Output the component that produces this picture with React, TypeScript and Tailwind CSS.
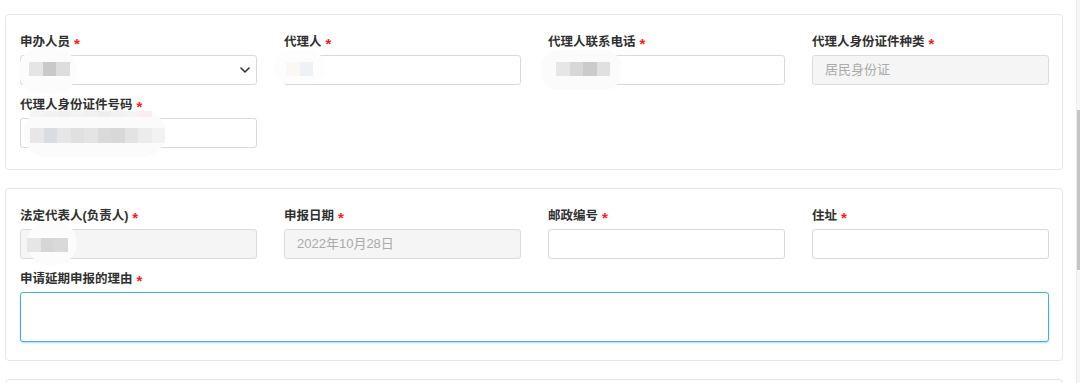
import React from 'react'

const FONT = "font-['Liberation_Sans','Noto_Sans_CJK_SC',sans-serif]"

// 打码的马赛克块（截图里被模糊掉的内容）
function Mosaic({ colors, h = 14 }: { colors: string[]; h?: number }) {
  return (
    <div className="flex blur-[0.4px]">
      {colors.map((c, i) => (
        <div key={i} className="w-[13.5px]" style={{ backgroundColor: c, height: h }} />
      ))}
    </div>
  )
}

function Label({ text }: { text: string }) {
  return (
    <div className="flex items-center h-5 mb-[3px] text-[12.5px] font-bold text-[#303030] leading-5">
      <span>{text}</span>
      <span className="ml-[4px] text-[15px] font-bold text-[#ff1a1a] translate-y-[2px]">*</span>
    </div>
  )
}

function TextInput({ value, disabled }: { value?: string; disabled?: boolean }) {
  return (
    <div
      className={`h-[30px] rounded-[3px] border px-3 flex items-center text-[13px] text-[#aaa] ${
        disabled ? 'bg-[#f5f5f5] border-[#dcdcdc]' : 'bg-white border-[#d9d9d9]'
      }`}
    >
      {value}
    </div>
  )
}

function Select() {
  return (
    <div className="h-[30px] rounded-[3px] border border-[#d9d9d9] bg-white flex items-center justify-end pr-[6px]">
      <svg width="10" height="6" viewBox="0 0 10 6" fill="none">
        <path d="M1 1l4 4 4-4" stroke="#333" strokeWidth="1.6" strokeLinecap="round" strokeLinejoin="round" />
      </svg>
    </div>
  )
}

export default function App() {
  return (
    <div className={`relative flex h-[383px] w-[1080px] overflow-hidden bg-white ${FONT}`}>
      <div className="w-[1076px]">
        {/* 申办人员 / 代理人 */}
        <div className="ml-[5px] mt-[14px] w-[1058px] rounded-[4px] border border-[#e6e6e6] pl-[14px] pr-[13px] pt-[17px] pb-[21px]">
          <div className="grid grid-cols-4 gap-x-[27px] gap-y-[10px]">
            <div>
              <Label text="申办人员" />
              <Select />
            </div>
            <div>
              <Label text="代理人" />
              <TextInput />
            </div>
            <div>
              <Label text="代理人联系电话" />
              <TextInput />
            </div>
            <div>
              <Label text="代理人身份证件种类" />
              <TextInput value="居民身份证" disabled />
            </div>
            <div>
              <Label text="代理人身份证件号码" />
              <TextInput />
            </div>
          </div>
        </div>

        {/* 法定代表人 / 申报信息 */}
        <div className="ml-[5px] mt-[18px] w-[1058px] rounded-[4px] border border-[#e6e6e6] pl-[14px] pr-[13px] pt-[17px] pb-[18px]">
          <div className="grid grid-cols-4 gap-x-[27px] gap-y-[10px]">
            <div>
              <Label text="法定代表人(负责人)" />
              <TextInput disabled />
            </div>
            <div>
              <Label text="申报日期" />
              <TextInput value="2022年10月28日" disabled />
            </div>
            <div>
              <Label text="邮政编号" />
              <TextInput />
            </div>
            <div>
              <Label text="住址" />
              <TextInput />
            </div>
            <div className="col-span-4">
              <Label text="申请延期申报的理由" />
              <div className="h-[50px] rounded-[3px] border border-[#45ace6] bg-white shadow-[0_1px_2px_rgba(69,172,230,0.45)]" />
            </div>
          </div>
        </div>

        <div className="ml-[5px] mt-[18px] w-[1058px] h-[40px] rounded-[4px] border border-[#e6e6e6]" />
      </div>

      {/* 滚动条 */}
      <div className="w-[4px] h-full bg-[#f6f6f6] border-l border-[#ececec]">
        <div className="mt-[110px] h-[160px] w-[3px] bg-[#c4c4c4]" />
      </div>

      {/* 打码覆盖层 */}
      <div className="absolute left-[18px] top-[48px] w-[59px] h-[45px] rounded-full bg-[#fcfcfc] flex flex-col items-start pl-[11px] pt-[14px]">
        <Mosaic colors={['#e5e5e5', '#c9c9c9', '#dddddd']} />
      </div>
      <div className="absolute left-[273px] top-[50px] w-[52px] h-[34px] rounded-full bg-[#fdfdfd] pl-[13px] pt-[12px]">
        <Mosaic colors={['#fbf7f3', '#eef1f6']} />
      </div>
      <div className="absolute left-[541px] top-[50px] w-[80px] h-[40px] rounded-[16px] bg-[#fbfbfb] pl-[15px] pt-[12px]">
        <Mosaic colors={['#e6e6e6', '#d7d7d7', '#cbcbcb', '#e0e0e0']} />
      </div>
      <div className="absolute left-[24px] top-[110px] w-[141px] h-[47px] rounded-[22px] bg-[#fbfbfb] pl-[6px] pt-[1px]">
        <Mosaic h={6} colors={['#f4f4f4', '#f2f2f2', '#efefef', '#f3f3f3', '#f1f1f1', '#eeeeee', '#f2f2f2', '#f4f4f4', '#fbeeee']} />
        <div className="mt-[11px]">
          <Mosaic h={15} colors={['#e7e7e7', '#d9dde2', '#e6e6e6', '#e0e0e0', '#e4e4e4', '#dadada', '#d8d8d8', '#e3e3e3', '#ececec', '#f2f2f2']} />
        </div>
      </div>
      <div className="absolute left-[27px] top-[221px] w-[50px] h-[44px] rounded-full bg-[#fcfcfc] pt-[17px]">
        <Mosaic colors={['#e6e6e6', '#d6d6d6', '#d9d9d9']} />
      </div>
    </div>
  )
}
